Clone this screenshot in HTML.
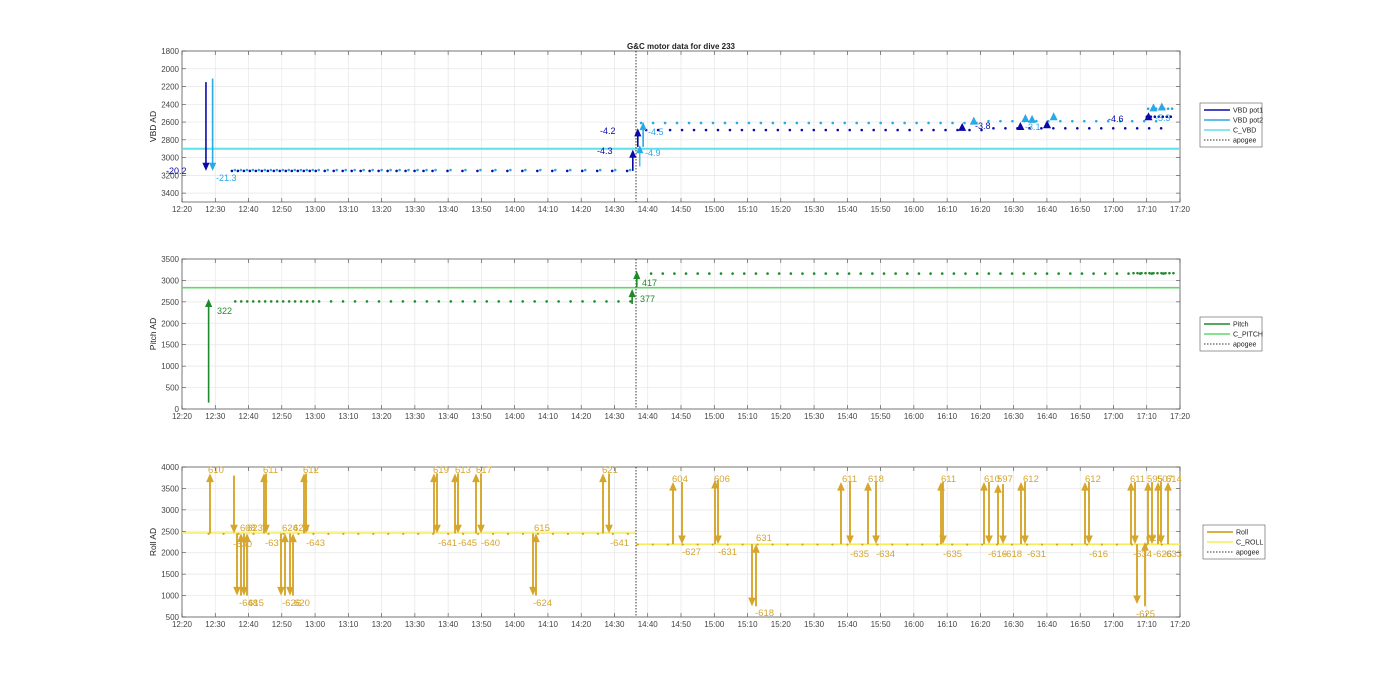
<!DOCTYPE html>
<html><head><meta charset="utf-8"><style>
html,body{margin:0;padding:0;background:#fff;width:1400px;height:693px;overflow:hidden}
svg{display:block;font-family:"Liberation Sans",Arial,sans-serif}
</style></head><body>
<svg id="s" width="1400" height="693" viewBox="0 0 1400 693" xmlns="http://www.w3.org/2000/svg">
<text x="681" y="49" font-size="8" font-weight="bold" text-anchor="middle" fill="#222">G&amp;C motor data for dive 233</text>
</svg>
<script>
var s=document.getElementById('s'),h='';
var X0=182,X1=1180,AP=636;
function tx(t){return X0+t*3.327;}
function frame(top,bot,yt,label){
  for(var i=0;i<=30;i++){var x=X0+i*(X1-X0)/30;
    h+='<line x1="'+x+'" y1="'+top+'" x2="'+x+'" y2="'+bot+'" stroke="#e6e6e6" stroke-width="0.7"/>';
    h+='<line x1="'+x+'" y1="'+bot+'" x2="'+x+'" y2="'+(bot-4)+'" stroke="#444" stroke-width="0.6"/>';
    h+='<line x1="'+x+'" y1="'+top+'" x2="'+x+'" y2="'+(top+4)+'" stroke="#444" stroke-width="0.6"/>';
    var m=20+i*10,hh=12+Math.floor(m/60),mm=m%60;
    h+='<text x="'+x+'" y="'+(bot+10)+'" font-size="8" text-anchor="middle" fill="#444">'+hh+':'+(mm<10?'0':'')+mm+'</text>';}
  yt.forEach(function(p){h+='<line x1="'+X0+'" y1="'+p[0]+'" x2="'+X1+'" y2="'+p[0]+'" stroke="#e6e6e6" stroke-width="0.7"/>';
    h+='<line x1="'+X0+'" y1="'+p[0]+'" x2="'+(X0+4)+'" y2="'+p[0]+'" stroke="#444" stroke-width="0.6"/>';
    h+='<line x1="'+X1+'" y1="'+p[0]+'" x2="'+(X1-4)+'" y2="'+p[0]+'" stroke="#444" stroke-width="0.6"/>';
    h+='<text x="'+(X0-3)+'" y="'+(p[0]+3)+'" font-size="8" text-anchor="end" fill="#444">'+p[1]+'</text>';});
  h+='<rect x="'+X0+'" y="'+top+'" width="'+(X1-X0)+'" height="'+(bot-top)+'" fill="none" stroke="#444" stroke-width="0.7"/>';
  h+='<text transform="translate(156,'+((top+bot)/2)+') rotate(-90)" font-size="8.5" text-anchor="middle" fill="#222">'+label+'</text>';
}
function apo(top,bot){h+='<line x1="'+AP+'" y1="'+top+'" x2="'+AP+'" y2="'+bot+'" stroke="#222" stroke-width="0.9" stroke-dasharray="1.5,1.5"/>';}
function hl(y,x1,x2,c,w){h+='<line x1="'+x1+'" y1="'+y+'" x2="'+x2+'" y2="'+y+'" stroke="'+c+'" stroke-width="'+w+'"/>';}
function dot(x,y,c,r){h+='<circle cx="'+x+'" cy="'+y+'" r="'+(r||1.3)+'" fill="'+c+'"/>';}
function arr(x,y1,y2,c,w,hs){hs=hs||4.5;var d=y2<y1?1:-1;
  h+='<line x1="'+x+'" y1="'+y1+'" x2="'+x+'" y2="'+(y2+d*hs)+'" stroke="'+c+'" stroke-width="'+w+'"/>';
  h+='<polygon points="'+(x-hs*0.8)+','+(y2+d*hs*1.8)+' '+(x+hs*0.8)+','+(y2+d*hs*1.8)+' '+x+','+y2+'" fill="'+c+'"/>';}
function tt(x,y,t,c,sz){h+='<text x="'+x+'" y="'+y+'" font-size="'+(sz||9)+'" fill="'+c+'">'+t+'</text>';}
function legend(x,y,w,items){var hh=items.length*10+4;
  h+='<rect x="'+x+'" y="'+y+'" width="'+w+'" height="'+hh+'" fill="#fff" stroke="#555" stroke-width="0.6"/>';
  items.forEach(function(it,i){var yy=y+7+i*10;
    h+='<line x1="'+(x+4)+'" y1="'+yy+'" x2="'+(x+30)+'" y2="'+yy+'" stroke="'+it[1]+'" stroke-width="'+(it[2]||1.5)+'"'+(it[3]?' stroke-dasharray="1.5,1.5"':'')+'/>';
    h+='<text x="'+(x+33)+'" y="'+(yy+2.5)+'" font-size="7" fill="#222">'+it[0]+'</text>';});}

var T1=51,B1=202;var y1=function(v){return T1+(v-1800)/1700*(B1-T1);};
var yt=[];for(var v=1800;v<=3400;v+=200)yt.push([y1(v),v]);
frame(T1,B1,yt,'VBD AD');
var DB='#0a0aa8',LB='#2aa8e8',CY='#5ee0e8';
hl(y1(2900),X0,X1,CY,2);
for(var t=15;t<136;t+=(t<40?1.8:t<75?2.7:4.5)){dot(tx(t),y1(3150),DB);dot(tx(t+0.9),y1(3140),LB);}
for(var t=138;t<293;t+=3.6){var lv=t<240?0:-20;dot(tx(t+1.5),y1(2690+lv),DB);dot(tx(t),y1(2620+lv-10),LB);}
for(var t=290;t<298;t+=1.2){dot(tx(t),y1(2540),DB);dot(tx(t+0.4),y1(2450),LB);}
apo(T1,B1);
arr(tx(7.2),y1(2150),y1(3150),DB,1.6);arr(tx(9.2),y1(2110),y1(3150),LB,1.6);
tt(166,174,'-20.2',DB);tt(216,181,'-21.3',LB);
arr(tx(135.5),y1(3150),y1(2910),DB,1.6);arr(tx(137),y1(2880),y1(2670),DB,1.6);
arr(tx(138.6),y1(2880),y1(2600),LB,1.6);arr(tx(137.6),y1(3100),y1(2860),LB,1.2);
tt(600,134,'-4.2',DB);tt(597,154,'-4.3',DB);tt(648,135,'-4.5',LB);tt(645,156,'-4.9',LB);
[[234.5,2660,DB],[238,2590,LB],[252,2650,DB],[253.5,2560,LB],[255.5,2570,LB],[260,2630,DB],[262,2540,LB],[290.5,2540,DB],[292,2440,LB],[294.5,2430,LB]].forEach(function(p){var x=tx(p[0]),y=y1(p[1]);h+='<polygon points="'+(x-4)+','+(y+3.5)+' '+(x+4)+','+(y+3.5)+' '+x+','+(y-4.5)+'" fill="'+p[2]+'"/>';});
tt(975,129,'-3.8',DB);tt(1025,130,'-3.1',LB);tt(1108,122,'-4.6',DB);tt(1155,121,'-5.3',LB);
legend(1200,103,62,[['VBD pot1',DB],['VBD pot2',LB],['C_VBD',CY],['apogee','#333',0.9,1]]);

var T2=259,B2=409;var y2=function(v){return B2-v/3500*(B2-T2);};
yt=[];for(var v=0;v<=3500;v+=500)yt.push([y2(v),v]);
frame(T2,B2,yt,'Pitch AD');
var DG='#1f8a2a',LG='#5fd86a';
hl(y2(2830),X0,X1,LG,1.6);
for(var t=16;t<135;t+=(t<40?1.8:3.6))dot(tx(t),y2(2510),DG);
for(var t=141;t<297;t+=3.5)dot(tx(t),y2(3160),DG);
for(var t=286;t<298;t+=1.2)dot(tx(t),y2(3170),DG);
apo(T2,B2);
arr(tx(8),y2(150),y2(2570),DG,1.6);tt(217,314,'322',DG);
arr(tx(135.3),y2(2450),y2(2800),DG,1.6);arr(tx(136.7),y2(2850),y2(3220),DG,1.6);
tt(642,286,'417',DG);tt(640,302,'377',DG);
legend(1200,317,62,[['Pitch',DG],['C_PITCH',LG],['apogee','#333',0.9,1]]);

var T3=467,B3=617;var y3=function(v){return B3-(v-500)/3500*(B3-T3);};
yt=[];for(var v=500;v<=4000;v+=500)yt.push([y3(v),v]);
frame(T3,B3,yt,'Roll AD');
var GO='#d6a52c',YL='#f5ee5a';
hl(y3(2460),X0,AP,YL,1.6);hl(y3(2200),AP,X1,YL,1.6);
for(var t=8;t<136;t+=4.5)dot(tx(t),y3(2440),GO,1.1);
for(var t=137;t<298;t+=4.5)dot(tx(t),y3(2190),GO,1.1);
apo(T3,B3);
var R=GO,W=1.9,U=3850,D=2450;
[[210,D,U],[234,3800,D],[237,D,1000],[241,1000,D],[244,D,1000],[247,1000,D],[264,D,U],[266,U,D],[281,D,1000],[285,1000,D],[290,D,1000],[293,1000,D],[304,D,U],[306,U,D],
 [434,D,U],[437,U,D],[455,D,U],[458,U,D],[476,D,U],[481,U,D],[533,D,1000],[536,1000,D],[603,D,U],[609,U,D],
 [673,2200,3650],[682,3650,2200],[715,2200,3700],[718,3700,2200],[752,2200,750],[756,750,2200],[841,2200,3650],[850,3650,2200],[868,2200,3650],[876,3650,2200],
 [941,2200,3650],[943,3650,2200],[984,2200,3650],[989,3650,2200],[998,2200,3600],[1003,3600,2200],[1021,2200,3650],[1025,3650,2200],[1085,2200,3650],[1089,3650,2200],
 [1131,2200,3650],[1135,3650,2200],[1137,2200,800],[1145,750,2250],[1148,2200,3650],[1152,3650,2200],[1158,2200,3650],[1161,3650,2200],[1168,2200,3650]].forEach(function(p){arr(p[0],y3(p[1]),y3(p[2]),R,W,4.8);});
[[208,473,'610'],[263,473,'611'],[303,473,'612'],[433,473,'619'],[455,473,'613'],[476,473,'617'],[602,473,'621'],
 [240,531,'608'],[247,531,'623'],[282,531,'624'],[293,531,'626'],[534,531,'615'],
 [233,547,'-630'],[265,546,'-637'],[306,546,'-643'],[438,546,'-641'],[458,546,'-645'],[481,546,'-640'],[610,546,'-641'],
 [239,606,'-648'],[248,606,'615'],[282,606,'-626'],[294,606,'620'],[533,606,'-624'],
 [672,482,'604'],[714,482,'606'],[756,541,'631'],[842,482,'611'],[868,482,'618'],[941,482,'611'],[984,482,'610'],[997,482,'597'],[1023,482,'612'],[1085,482,'612'],[1130,482,'611'],[1147,482,'595'],[1157,482,'507'],[1166,482,'614'],[1146,541,'625'],
 [682,555,'-627'],[718,555,'-631'],[755,616,'-618'],[850,557,'-635'],[876,557,'-634'],[943,557,'-635'],[988,557,'-616'],[1003,557,'-618'],[1027,557,'-631'],[1089,557,'-616'],[1133,557,'-634'],[1153,557,'-626'],[1163,557,'-633'],[1136,617,'-625']].forEach(function(p){tt(p[0],p[1],p[2],GO,9.5);});
legend(1203,525,62,[['Roll',GO,1.8],['C_ROLL',YL],['apogee','#333',0.9,1]]);
s.insertAdjacentHTML('beforeend',h);
</script>
</body></html>
